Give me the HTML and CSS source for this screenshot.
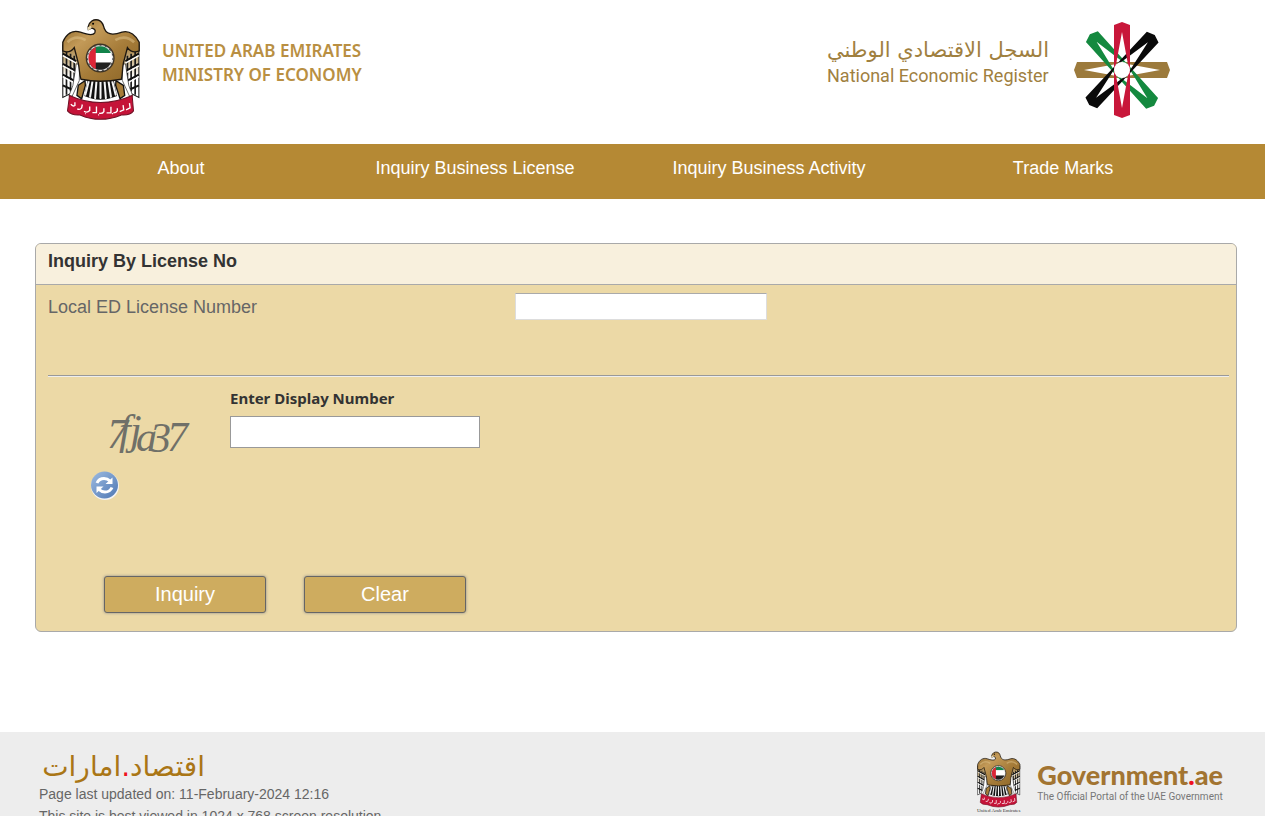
FILE: index.html
```html
<!DOCTYPE html>
<html lang="en">
<head>
<meta charset="utf-8">
<title>National Economic Register</title>
<link rel="stylesheet" href="styles.css">
</head>
<body>
<svg class="defs" aria-hidden="true">
  <defs>
    <linearGradient id="gold" x1="0" y1="0" x2="1" y2="1">
      <stop offset="0" stop-color="#8a6426"/><stop offset=".3" stop-color="#c39a58"/><stop offset=".6" stop-color="#a67c39"/><stop offset="1" stop-color="#8a6426"/>
    </linearGradient>
    <linearGradient id="wing" x1="0" y1="0" x2="0" y2="1">
      <stop offset="0" stop-color="#a67c39"/><stop offset=".3" stop-color="#c9b48a"/><stop offset=".6" stop-color="#fff"/>
    </linearGradient>
    <clipPath id="disc"><circle cx="181" cy="159" r="35"/></clipPath>
    <g id="feathers">
      <path d="M70 120 110 124 118 176 108 222 98 262 70 276Z" fill="url(#wing)" stroke="#111" stroke-width="3"/>
      <path d="M81 140v128M93 146v112M104 152v84" stroke="#1a1a1a" stroke-width="5"/>
      <path d="M70 146 110 168M70 176 114 200M70 208 108 228M70 240 100 254" stroke="#111" stroke-width="6"/>
      <path d="M70 152 110 174M70 182 114 206M70 214 106 234" stroke="#fff" stroke-width="4"/>
      <path d="M110 176 120 178 119 226 98 272 88 272 100 240Z" fill="#fff" stroke="#222" stroke-width="2"/>
    </g>
    <symbol id="falcon" viewBox="62 40 240 306">
      <use href="#feathers"/>
      <use href="#feathers" transform="matrix(-1 0 0 1 366 0)"/>
      <path d="M144 222 221 222 231 272Q181 294 134 272Z" fill="#111"/>
      <path d="M147 229 137 268M158 229 151 274M170 228 166 278M182 228v50M194 228 198 278M206 229 213 274M217 229 227 268" stroke="#f5f5f5" stroke-width="6" stroke-linecap="round"/>
      <path d="M116 240 136 226 137 240 126 280 112 270ZM250 240 228 226 227 240 240 280 254 270Z" fill="#a67c39" stroke="#111" stroke-width="4"/>
      <path d="M145 67C148 50 162 43 175 46C190 50 190 63 194 73C202 92 224 90 246 82C270 75 288 94 297 112L297 138C282 144 270 139 262 128L250 174C246 195 248 207 244 222Q181 234 124 222C118 206 120 190 116 174L104 128C96 139 84 144 70 138L70 112C80 88 98 74 122 82C139 88 160 93 165 84C169 75 163 71 155 70L146 74Z" fill="url(#gold)" stroke="#1d1710" stroke-width="4"/>
      <path d="M84 112Q108 88 138 106M282 112Q256 88 226 106" fill="none" stroke="#dfc38c" stroke-width="8" opacity=".5"/>
      <circle cx="160" cy="57" r="3"/>
      <path d="M143 68l10-5 3 7-10 7Z" fill="#e8d7ae"/>
      <circle cx="181" cy="159" r="41" fill="#ddd" stroke="#3c3224" stroke-width="4"/>
      <circle cx="181" cy="159" r="38" fill="none" stroke="#444" stroke-width="3" stroke-dasharray="6 10"/>
      <g clip-path="url(#disc)">
        <path d="M145 120h75v24h-75Z" fill="#12834a"/><path d="M145 144h75v28h-75Z" fill="#fff"/><path d="M145 172h75v28h-75Z" fill="#20201f"/><path d="M144 120h24v80h-24Z" fill="#dc2637"/>
      </g>
      <path d="M90 270Q181 312 276 270L280 316Q270 330 244 328 181 354 121 328 96 330 84 316Z" fill="#c51338" stroke="#6e1024" stroke-width="3"/>
      <path d="M94 296q5 8 12 4v-10m7 20q8 4 13-3l2-10m5 20q9 6 17-2v-12m8 18h12v-18m8 20q10 2 14-5v-10m8 14h13v-18m7 18q9 0 12-6v-8m7 10 12-5-2-14m9 14 12-6-2-14m-131 31h2m36 4h3m38-4h3" fill="none" stroke="#fff" stroke-width="4"/>
    </symbol>
  </defs>
</svg>

<header class="masthead">
  <div class="brand">
    <svg class="brand-emblem" role="img" aria-label="UAE emblem"><use href="#falcon"/></svg>
    <div class="brand-text">UNITED ARAB EMIRATES<br>MINISTRY OF ECONOMY</div>
  </div>
  <div class="register">
    <div class="register-text">
      <div class="register-ar" lang="ar" dir="rtl">السجل الاقتصادي الوطني</div>
      <div class="register-en">National Economic Register</div>
    </div>
    <svg class="star" viewBox="-49 -49 98 98" role="img" aria-label="National Economic Register logo">
      <defs><path id="arm" d="M-8-45 0-48 8-45V45L0 48-8 45ZM0-38-7 0 0 38 7 0Z" fill-rule="evenodd"/></defs>
      <use href="#arm" fill="#9c7a3c" transform="rotate(90)"/>
      <use href="#arm" fill="#14893f" transform="rotate(-42)"/>
      <use href="#arm" fill="#0a0a0a" transform="rotate(43)"/>
      <use href="#arm" fill="#c8173a"/>
      <circle r="8" fill="#fff"/>
    </svg>
  </div>
</header>

<nav class="nav">
  <a href="#">About</a>
  <a href="#">Inquiry Business License</a>
  <a href="#">Inquiry Business Activity</a>
  <a href="#">Trade Marks</a>
</nav>

<main>
  <form class="panel">
    <h1 class="panel-title">Inquiry By License No</h1>
    <div class="panel-body">
      <div class="license-row">
        <label for="license">Local ED License Number</label>
        <input class="license-input" id="license" type="text">
      </div>
      <hr class="rule">
      <div class="captcha-row">
        <div class="captcha-side">
          <svg class="captcha" viewBox="0 0 84 56" role="img" aria-label="Display number">
            <text class="captcha-text" x="1 13 24 30 44 61" y="42 38 38 45 46 45">7fja37</text>
          </svg>
          <button class="refresh" type="button" aria-label="Refresh">
            <svg viewBox="0 0 30 30">
              <defs><linearGradient id="blue" x1="0" y1="0" x2="1" y2="1"><stop offset="0" stop-color="#9dbbe0"/><stop offset="1" stop-color="#4f78b4"/></linearGradient></defs>
              <circle cx="15" cy="15" r="14" fill="#f4f4f4"/>
              <circle cx="14.500" cy="14" r="13.500" fill="url(#blue)"/>
              <path d="M7 12Q9 7.500 14 7.500 17.500 7.500 20 10M22 16.500Q20 21 15 21 11.500 21 9 18.500" fill="none" stroke="#fff" stroke-width="3"/>
              <path d="M22.500 6.500V13H15.500ZM6.500 22V15.500H13.500Z" fill="#fff"/>
            </svg>
          </button>
        </div>
        <div class="captcha-entry">
          <label class="captcha-label" for="display-number">Enter Display Number</label>
          <input class="captcha-input" id="display-number" type="text">
        </div>
      </div>
      <div class="actions">
        <button class="action" type="submit">Inquiry</button>
        <button class="action" type="reset">Clear</button>
      </div>
    </div>
  </form>
</main>

<footer class="footer">
  <div>
    <div class="domain" lang="ar" dir="rtl">اقتصاد<span class="dot">.</span>امارات</div>
    <p class="note">Page last updated on: 11-February-2024 12:16</p>
    <p class="note">This site is best viewed in 1024 x 768 screen resolution</p>
  </div>
  <a class="portal" href="#">
    <span class="portal-mark">
      <svg class="portal-emblem" aria-hidden="true"><use href="#falcon"/></svg>
      <span class="portal-caption">United Arab Emirates</span>
    </span>
    <span class="portal-text">
      <span class="portal-name">Government<span class="dot">.</span>ae</span>
      <span class="portal-tag">The Official Portal of the UAE Government</span>
    </span>
  </a>
</footer>
</body>
</html>
```
FILE: styles.css
```css
* { box-sizing: border-box; }

html { scrollbar-width: none; }

body {
  margin: 0;
  background: #fff;
  color: #666;
  font-family: "Liberation Sans", Arial, sans-serif;
}

.defs { position: absolute; width: 0; height: 0; }

.masthead {
  display: flex;
  justify-content: space-between;
  height: 144px;
  padding: 18px 94px 0 60px;
}

.brand { display: flex; gap: 21px; }
.brand-emblem { width: 81px; height: 103px; }

.brand-text {
  padding-top: 21px;
  color: #b98f42;
  font: 600 17px/24px "Noto Sans", sans-serif;
}

.register { display: flex; gap: 24px; }
.register-text { padding-top: 18px; color: #a0803f; }
.register-ar { font: 21px/28px "DejaVu Sans", sans-serif; }
.register-en { font: 400 18px/24px Roboto, sans-serif; }
.star { width: 98px; height: 98px; margin-top: 3px; }

.nav {
  display: grid;
  grid-template-columns: repeat(4, 1fr);
  height: 55px;
  padding: 12px 55px 0 34px;
  background: #b58934;
}

.nav a {
  color: #fff;
  font-size: 18px;
  line-height: 24px;
  text-align: center;
  text-decoration: none;
}

.panel {
  margin: 44px 28px 100px 35px;
  border: 1px solid #a9a9a9;
  border-radius: 6px;
  background: #ecd9a6;
  overflow: hidden;
}

.panel-title {
  height: 41px;
  margin: 0;
  padding: 5px 12px;
  border-bottom: 1px solid #a9a9a9;
  background: #f8f0dd;
  color: #333;
  font-size: 18px;
  line-height: 24px;
}

.panel-body { padding: 8px 7px 18px 12px; }

.license-row {
  display: grid;
  grid-template-columns: 467px 1fr;
  font-size: 18px;
  line-height: 28px;
}

.license-input {
  width: 252px;
  height: 27px;
  border: 1px solid #ddd;
  border-top-color: #aaa;
  background: #fff;
}

.rule {
  margin: 54px 0 0;
  border: 0;
  border-top: 1px solid #999;
  border-bottom: 1px solid #eee;
}

.captcha-row { display: flex; height: 176px; padding-top: 10px; }
.captcha-side { width: 182px; padding-top: 19px; }
.captcha { display: block; width: 84px; height: 56px; margin-left: 58px; }
.captcha-text { fill: #707068; font: italic 42px "Liberation Serif", serif; }

.refresh {
  display: block;
  width: 30px;
  height: 30px;
  margin: 9px 0 0 42px;
  padding: 0;
  border: 0;
  background: none;
}

.refresh svg { display: block; }

.captcha-label {
  display: block;
  margin-bottom: 7px;
  color: #333;
  font: 700 15px/22px "Noto Sans", sans-serif;
}

.captcha-input {
  width: 250px;
  height: 32px;
  border: 1px solid #999;
  background: #fff;
}

.actions { display: flex; gap: 38px; padding: 23px 0 0 56px; }

.action {
  width: 162px;
  height: 37px;
  border: 1px solid #666;
  border-radius: 3px;
  background: #ceac5f;
  box-shadow: 0 0 3px #888;
  color: #fff;
  font: 20px "Liberation Sans", Arial, sans-serif;
}

.footer {
  display: flex;
  justify-content: space-between;
  padding: 18px 42px 24px 39px;
  background: #ededed;
}

.domain {
  width: 166px;
  color: #aa7616;
  font: 28px/33px "DejaVu Sans", sans-serif;
  white-space: nowrap;
}

.dot { color: #f01020; }
.note { margin: 0; font-size: 14px; line-height: 22px; }

.portal { display: flex; gap: 16px; color: #777; text-decoration: none; }
.portal-mark { width: 45px; padding-top: 1px; }
.portal-emblem { display: block; width: 45px; height: 57px; }
.portal-caption { display: block; color: #333; font: 5px/6px "Liberation Serif", serif; text-align: center; white-space: nowrap; }
.portal-text { padding-top: 10px; }
.portal-name { display: block; color: #a27431; font: 900 27px/30px Lato, sans-serif; }
.portal-tag { display: block; font: 10px/14px Roboto, sans-serif; white-space: nowrap; }
```
